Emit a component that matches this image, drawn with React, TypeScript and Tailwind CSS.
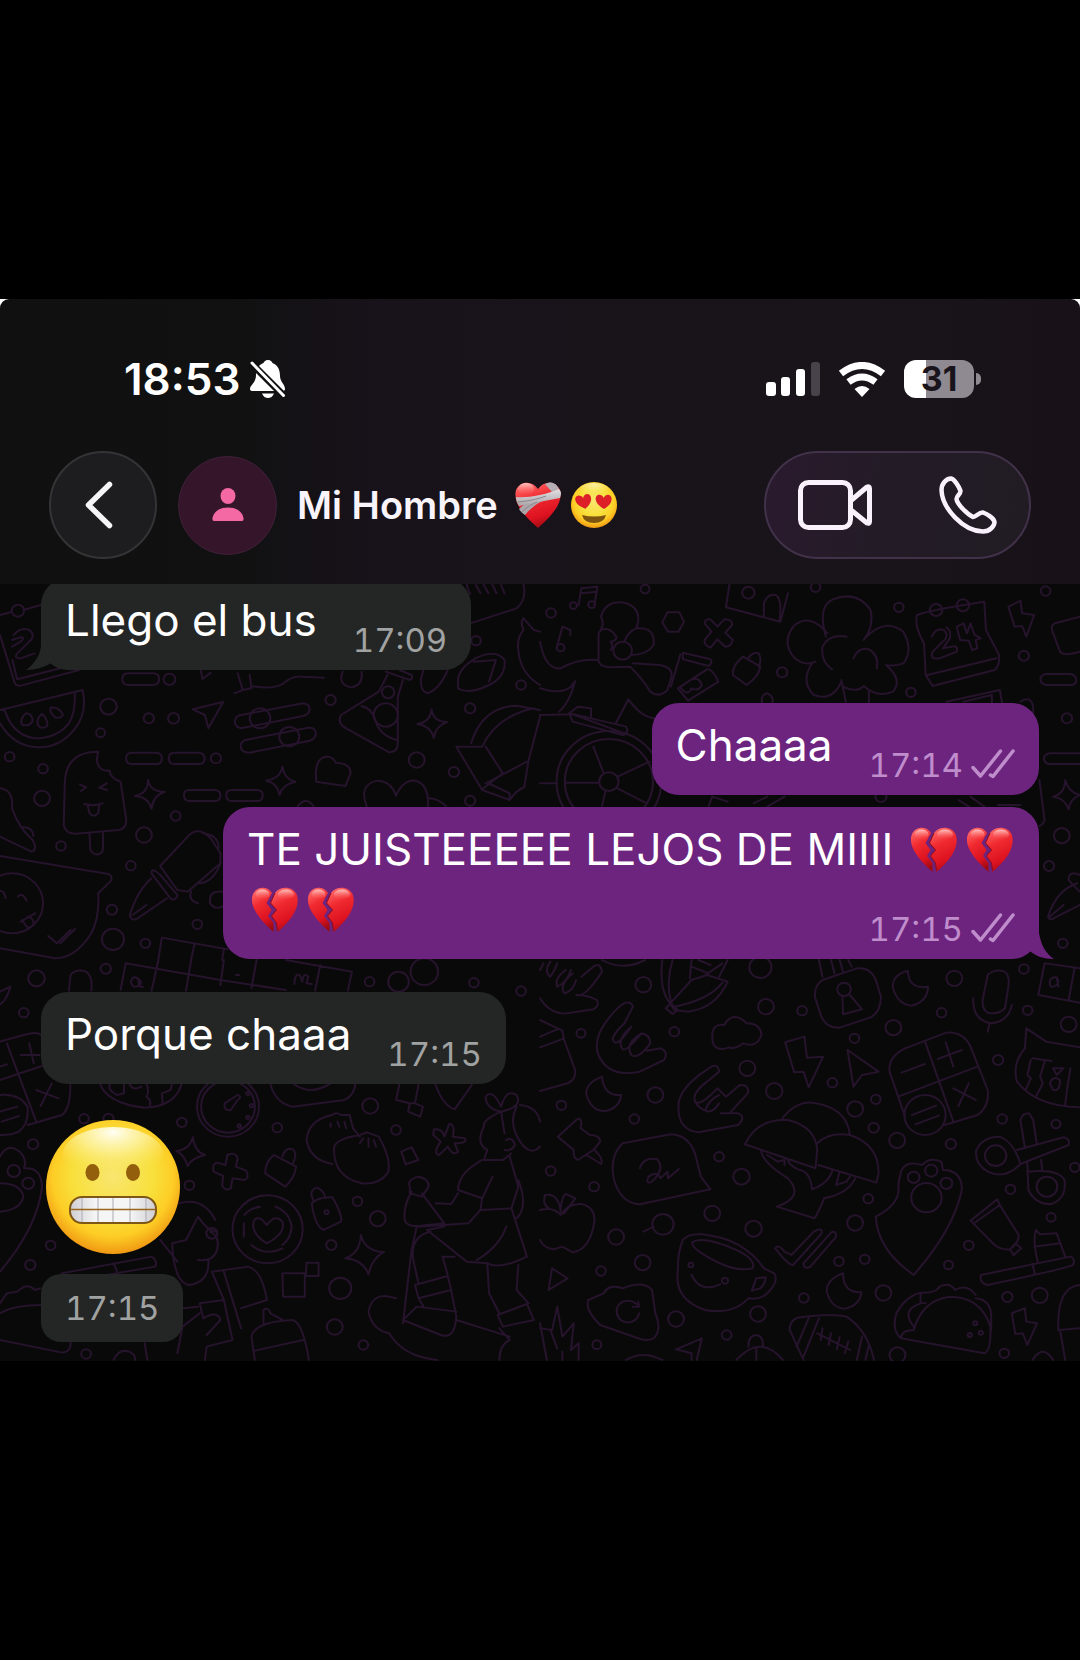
import type { ReactNode } from 'react';

type Dot = [number, number, number];

// Each quarter of the wallpaper is drawn on its own 1568-wide grid.
const topLeft = {
  lines: [
    'M0 105L30 97M68 90L118 75M0 165L40 300Q43 320 60 317L230 270M36 240L50 298L175 265M40 165Q60 140 85 150Q105 165 85 185L55 215Q35 235 60 235L100 220M35 200L60 185Q75 170 58 172L35 180',
    'M0 390L240 330Q255 400 215 450Q170 505 110 502Q40 500 0 430M12 386Q35 465 100 475Q165 475 200 430Q220 395 217 340M75 400Q55 420 65 435Q90 440 95 420Q92 400 75 400M122 402Q105 415 110 435Q120 450 137 438Q140 418 122 402M147 383Q143 400 162 413Q182 415 182 402Q170 380 147 383',
    'M372 280H443Q462 280 462 298Q462 315 443 315H372Q355 315 355 298Q355 280 372 280M383 518H455Q470 520 470 535Q470 552 455 552H383Q366 552 366 535Q366 518 383 518M506 518H578Q594 520 594 535Q594 552 578 552H506Q490 552 490 535Q490 518 506 518M550 630H625Q640 632 640 646Q640 663 625 663H550Q534 663 534 646Q534 630 550 630M673 630H748Q763 632 763 646Q763 663 748 663H673Q657 663 657 646Q657 630 673 630',
    'M560 388L648 366L605 445L595 405ZM583 270L588 297L612 278',
    'M695 406L880 370Q900 372 899 390Q895 405 880 408L700 445Q680 440 682 422Q684 410 695 406M713 480L895 443Q915 442 917 458Q918 475 900 482L725 518Q700 518 699 500Q698 485 713 480',
    'M1120 275L1190 300Q1200 295 1195 285L1160 270M1125 285L1100 335L990 405Q978 430 1005 445L1130 517Q1155 517 1155 490V350L1170 300M1050 378Q1080 385 1090 420Q1100 465 1152 480',
    'M1253 388Q1258 425 1298 426Q1265 437 1260 474Q1250 437 1212 432Q1250 425 1253 388M430 600Q435 635 478 636Q445 645 440 686Q430 650 392 648Q430 640 430 600M820 560Q825 598 858 606Q820 612 812 645Q805 608 773 602Q815 595 820 560',
    'M285 515Q190 515 188 610L185 735Q190 762 220 761L345 750Q370 745 366 715L350 605Q320 595 318 572Q285 575 281 540ZM260 760L262 808Q270 825 285 823Q300 820 299 800V757M232 613L250 622L235 633M310 610L288 623L311 630M245 672Q272 680 298 670M255 678L260 700Q270 715 285 700L288 675',
    'M945 530Q965 528 975 548Q1018 550 1018 580L1003 618L918 605L917 575Q920 535 945 530M1065 680Q1040 615 1095 602Q1135 602 1150 647Q1170 600 1205 602Q1245 610 1243 680M1245 655Q1270 655 1295 678M865 678Q888 648 910 678',
    'M1325 500L1400 500Q1440 410 1550 385M1325 500L1400 630L1480 660Q1500 630 1522 622L1535 540L1568 410M1368 490Q1400 380 1500 377L1568 390M1410 500L1460 580L1400 628M1410 610L1530 545M1422 612L1480 640V660',
    'M0 625Q40 630 35 685Q55 745 95 780Q110 810 92 815Q40 790 0 770M65 742Q95 740 97 768M0 828L315 882Q330 890 320 905L285 940Q290 1010 265 1060Q220 1135 160 1135L0 1105M0 932Q15 935 16 955M52 950Q65 935 77 962M60 1025L102 1000M65 1020Q80 1055 97 1035Q100 1015 80 1010M140 1068L165 1090L205 1050M175 1090L218 1047',
    'M465 858L545 770Q575 735 612 775L640 820V850L545 935L515 930ZM590 760Q635 765 635 805M440 880Q440 860 465 885L515 945Q510 965 495 955ZM440 895Q400 930 377 1005Q380 1025 400 1015L485 955M385 1005L425 975M555 935Q545 960 575 970M640 850Q620 905 580 910M645 935Q605 930 610 970Q625 990 645 980',
    'M470 1073L660 1108M470 1073L458 1150M565 1090L555 1140M650 1108L645 1140',
    'M1355 12Q1360 35 1365 42M1382 15L1395 40M1405 15L1418 40M1430 15L1442 40M1455 15L1465 40M1520 12Q1530 60 1500 85L1365 130M1520 115Q1510 125 1520 150Q1500 175 1505 210Q1510 280 1568 315M1520 115L1550 150L1568 155M1330 310Q1325 270 1380 235Q1440 205 1465 240Q1470 290 1420 315Q1360 345 1330 325ZM1375 245L1440 240L1420 305M1230 270Q1210 325 1240 340Q1275 330 1300 270',
    'M690 280L705 330L730 325L725 285M705 330L680 340M730 318Q790 330 820 312Q850 285 880 290L940 293M995 275Q980 315 1020 322Q1055 315 1050 275',
  ],
  dots: [
    [52, 92, 18], [492, 298, 17], [315, 380, 24], [292, 458, 13], [432, 415, 15], [504, 415, 16], [755, 415, 30], [840, 470, 29],
    [960, 360, 15], [1127, 337, 18], [1120, 405, 35], [1365, 385, 15], [1382, 182, 14], [1513, 315, 14], [28, 530, 14],
    [125, 566, 14], [122, 655, 23], [627, 535, 15], [510, 708, 14], [418, 765, 23], [177, 798, 14], [380, 857, 14], [1210, 540, 23],
    [1318, 576, 15], [1365, 662, 15], [325, 989, 15], [573, 1033, 14], [328, 1078, 32], [422, 1090, 14], [35, 970, 90],
  ] as Dot[],
};

const topRight = {
  lines: [
    'M112 75L120 25L167 20L158 75M120 40L165 35M48 205L65 140L88 150V165',
    'M0 185Q15 270 60 265Q110 235 170 240Q170 258 200 262L262 260Q300 300 320 335Q345 355 370 330M170 235V160Q190 135 177 110Q190 65 235 67Q290 75 285 125L280 145M177 150Q200 140 218 165Q230 180 205 185Q215 200 205 210M280 145Q335 140 330 195Q310 225 265 225M245 185Q255 155 280 145M270 250L345 255Q385 260 382 290L370 330M0 325Q60 345 90 320L102 303Q85 370 55 395M0 405L95 403L250 462M220 430L257 358Q300 420 345 415M85 400L250 440Q260 460 240 465L95 425Z',
    'M370 97H405L418 125L402 155H372L355 127ZM478 130Q480 115 495 118L515 140L535 118Q560 118 558 135L538 158L560 180Q555 200 538 200L515 178L495 203Q475 195 478 180L498 155Z',
    'M415 218L495 238Q502 250 490 258L415 238ZM408 222L380 320M400 325L485 268Q500 265 518 305L430 362ZM410 325Q430 350 440 325Q460 335 470 315Q460 290 445 298',
    'M590 230L640 260Q635 290 600 315L560 285Q558 255 590 230M605 235Q615 215 635 220Q645 240 635 260',
    'M550 12L540 82L698 125L720 40M650 112V70Q660 40 685 45Q705 60 695 125',
    'M830 170Q805 80 850 58Q920 30 960 90Q970 140 940 180M835 160Q780 95 735 140Q700 190 740 235Q770 260 800 245M890 170Q840 160 820 200Q815 245 848 268M940 178Q1000 110 1055 155Q1085 210 1055 250Q1025 260 1005 255M910 235Q925 200 955 208Q985 225 978 265M790 250Q755 305 795 345Q850 365 875 305M1005 255Q1055 300 1025 335Q980 355 940 318Q920 340 880 320M875 300L888 365M955 330V368',
    'M1095 105Q1130 90 1290 65L1295 150L1333 225Q1335 260 1320 270L1140 318L1120 285L1115 190Q1085 135 1095 105M1125 285L1325 235M1138 170Q1150 140 1175 152Q1190 170 1165 190L1140 215Q1130 240 1160 235L1210 215Q1215 195 1195 200L1170 205L1190 175Q1195 150 1180 142M1210 140L1220 180L1245 182L1255 210L1270 205L1265 180L1280 175L1262 165L1250 130L1240 160L1230 130Z',
    'M1360 80L1395 62L1400 100L1435 105L1412 170L1400 138L1378 140ZM1568 110L1495 130Q1480 135 1490 160L1510 215Q1520 230 1568 215M1470 282H1540Q1557 285 1557 300Q1557 315 1540 315H1470Q1453 312 1453 298Q1453 285 1470 282M1568 520H1480Q1462 525 1463 537Q1465 552 1480 552H1568',
    'M1525 600Q1535 638 1568 645Q1540 655 1535 688Q1525 655 1490 650Q1525 640 1525 600M1180 365L1335 330L1342 370M1230 365L1312 345V368M645 368Q640 345 660 340Q680 350 675 368M1395 365Q1425 345 1432 380V400M1450 600L1465 720Q1460 735 1450 738',
    'M1568 885Q1535 870 1535 900Q1560 930 1568 935M1560 910Q1500 930 1475 1010Q1480 1025 1500 1010L1568 975M1480 1010L1520 975',
    'M155 500L185 580M75 608H170M0 610H50M225 590L318 545M225 625L310 670M190 635L180 678',
    'M490 678L500 650L545 665M620 670L660 650M660 680L710 650M1215 660L1245 680M1250 650L1290 680M1330 675H1395M85 400L110 380L148 385V410',
  ],
  dots: [
    [32, 99, 14], [305, 27, 13], [97, 77, 10], [150, 74, 10], [60, 203, 11], [240, 212, 27], [605, 38, 18], [703, 277, 15],
    [800, 22, 14], [1042, 82, 14], [1150, 90, 18], [1228, 76, 18], [1468, 33, 14], [1405, 227, 15], [1077, 337, 14],
    [1530, 415, 15], [200, 605, 152], [200, 605, 128], [200, 605, 28], [1515, 767, 23], [1478, 858, 15], [1518, 1090, 14],
    [990, 650, 16],
  ] as Dot[],
};

const bottomLeft = {
  lines: [
    'M365 10L350 90M365 10L640 60L830 90M460 0L440 92M555 0L540 92M650 0L640 75M745 0L730 85M830 0L1022 35L1010 92M930 15L915 92M380 65Q385 45 400 55Q415 65 405 75Q385 90 380 65M400 55L405 80H415M855 72Q855 40 870 45L878 65Q880 35 895 50L890 70L905 72M685 45H695',
    'M200 92L205 45Q220 25 250 35Q270 50 265 92M0 95L30 80Q20 120 0 133M0 245L80 222Q110 215 120 225M0 360L130 315M20 250L105 485M80 495L180 465Q205 445 204 375M60 285H115M85 250L98 310M105 390L170 415M150 370L118 438M0 320L20 313M0 455L50 440M5 485L55 468M0 405Q55 400 80 440Q85 490 55 515Q30 527 0 525',
    'M290 370Q310 430 420 443Q510 440 528 370M320 370Q310 390 340 405L360 400V375M425 370Q435 395 425 410Q440 420 435 437M500 370L495 390L470 400L472 430M375 370Q385 395 410 380',
    'M652 430L690 405Q705 410 690 420L670 450Q650 455 652 430M785 372Q800 430 850 440L1000 420Q1030 405 1032 370M850 370Q900 410 960 370M1160 372L1150 420L1190 430L1185 455L1220 470L1228 440L1205 430L1215 375M1190 430H1205M1265 375Q1285 435 1320 448L1370 375',
    'M560 532Q565 575 595 585Q555 595 545 618Q535 585 512 573Q550 570 560 532M1048 825Q1060 875 1115 876Q1080 895 1070 943Q1055 900 1003 895Q1045 880 1048 825',
    'M660 585Q685 575 690 595L685 620L715 632Q725 655 710 660L675 655L670 685Q650 695 645 675L648 648L620 635Q615 610 630 608L655 615Z',
    'M795 585L860 620Q855 655 828 680L770 640Q770 605 795 585M820 590Q830 560 850 568Q865 580 850 612M905 730Q925 710 965 712Q995 765 990 785L940 810Q915 800 905 730M910 722Q895 690 920 683Q940 690 945 715',
    'M965 465Q895 480 890 540Q900 600 965 612M965 465Q975 455 990 465L1015 465L1025 505L1045 530M970 560Q980 535 1045 525L1065 517L1100 530Q1140 605 1125 640Q1100 675 1050 670Q965 650 970 560M960 490V500M980 485L985 500M1000 485L1005 505M1045 550L1055 535M1070 535V560M1085 540L1092 560',
    'M1260 508Q1285 505 1290 530L1305 492Q1322 492 1315 530L1350 535Q1358 550 1320 550L1330 575Q1315 590 1300 560L1275 585Q1255 580 1280 545L1258 525ZM1165 575L1195 562L1215 600L1178 613Z',
    'M1455 455Q1410 445 1410 410Q1430 385 1455 440Q1470 385 1500 405Q1520 440 1455 455M1455 455Q1400 480 1405 500Q1380 550 1415 570L1405 600H1460L1485 580M1455 455L1465 520M1500 440Q1475 490 1510 545Q1540 590 1568 560M1510 435Q1560 440 1568 485M1470 540Q1490 530 1495 555Q1485 575 1465 570M1400 600Q1330 640 1330 690L1400 715L1430 650M1480 590L1505 680L1485 745L1395 750M1485 745L1530 890Q1450 930 1415 910L1355 905L1240 810L1290 800M1395 750L1360 790L1215 800M1330 700L1310 732L1265 730M1400 715L1395 750M1505 660Q1535 740 1500 775M1470 800Q1450 860 1385 900',
    'M1190 680Q1180 660 1215 650Q1245 655 1245 680L1225 710L1190 700ZM1195 695Q1170 740 1175 780Q1180 800 1215 798L1290 790L1225 700M1210 800L1195 870L1170 1090M1250 815Q1190 830 1200 900L1215 970M1300 945L1285 890H1320M1205 975L1300 948L1310 990L1215 1015ZM1215 1015L1230 1040M1310 990L1325 1070Q1320 1140 1280 1125L1170 1080M1170 1080L1210 1040L1325 1055M1070 1055Q1080 1000 1130 1010L1150 1015M1070 1055Q1080 1110 1130 1120Q1170 1190 1270 1200M1415 910L1420 1000L1450 1060M1505 915L1500 990L1535 1030M1445 1065L1530 1032L1550 1080L1460 1100ZM1450 1105L1480 1140Q1450 1155 1450 1200M1325 1080L1480 1130',
    'M735 800Q735 765 760 778L775 795Q800 760 820 785Q830 820 775 850Q740 830 735 800M820 940H885V1010H822ZM890 908H925V948H888ZM710 765Q725 745 755 740M800 740Q840 755 847 800Q845 835 820 855M730 855Q770 890 820 865M708 790V830',
    'M0 590Q20 550 50 570Q80 590 70 625Q120 620 122 680Q110 800 0 935M0 670Q60 670 68 710Q60 750 0 755M520 730Q590 710 625 780M500 850L540 840L575 770Q600 810 625 815M500 850Q505 970 550 975Q610 965 605 900M610 815Q640 830 630 870Q620 905 575 900M465 840L515 905M180 940L440 890Q460 905 450 920L280 950M330 910L340 935M615 935L720 920Q760 930 775 1020M650 935L700 1105M615 935L650 1020M650 1020L580 1030L590 1075Q630 1050 640 1080L600 1125M650 1020L675 1140L600 1160L595 1200M700 1045L775 1020M530 1045L575 1040M515 1180L530 1100L580 1060M765 1090L765 1050Q780 1040 785 1060L820 1080M730 1130Q740 1085 850 1080Q880 1090 897 1200M730 1130L740 1200M740 1172L880 1140M420 1150L428 1200',
    'M0 1030L20 1000L50 995Q80 965 100 990L118 985M0 1060Q40 1035 120 1035M0 1140L180 1178Q210 1175 204 1140M330 1200Q345 1165 375 1175Q395 1185 392 1200',
  ],
  dots: [
    [106, 55, 24], [307, 26, 15], [69, 158, 14], [1232, 35, 40], [1157, 65, 30], [1073, 65, 14], [1376, 68, 14], [1513, 93, 14],
    [662, 440, 90], [662, 440, 78], [528, 487, 14], [805, 503, 14], [1075, 438, 23], [1150, 510, 14], [244, 476, 14], [315, 476, 15],
    [96, 553, 15], [550, 676, 14], [777, 808, 102], [1038, 724, 14], [1097, 776, 23], [962, 855, 15], [948, 757, 6],
    [147, 856, 14], [88, 915, 15], [988, 985, 32], [972, 1101, 23], [1055, 1155, 14], [250, 1182, 14], [82, 670, 17], [40, 633, 18],
    [615, 820, 16], [720, 400, 5], [730, 437, 5], [720, 472, 5], [695, 498, 5],
  ] as Dot[],
};

const bottomRight = {
  lines: [
    'M10 10L0 30M30 5Q10 35 30 50Q45 30 50 10M75 30Q40 55 50 80Q75 70 90 30M95 40Q55 75 70 100Q95 95 105 60M0 115Q30 165 80 160L155 148Q175 135 165 120Q140 105 105 105Q130 115 180 35Q175 5 155 20L120 50',
    'M230 140Q260 115 270 140L245 190M230 140Q150 220 168 280Q195 355 290 335L360 300Q375 275 350 265L310 272M245 190Q200 235 215 245Q225 260 265 200M265 200Q220 240 240 268Q250 275 295 220M295 220Q245 250 265 285Q285 300 320 250Q320 225 295 220',
    'M490 325Q515 305 520 335L485 365M490 325Q400 385 402 440Q400 510 460 517L575 495Q600 470 575 460H525M485 365Q440 400 450 425Q465 440 515 385M515 385L540 410L580 375Q610 375 603 400L550 460M480 450Q490 420 520 405M450 425Q465 450 490 455Q510 450 520 430',
    'M355 0Q345 90 378 130L390 150L430 155Q510 145 545 65L485 45L440 60L378 130M385 0Q365 70 380 125M440 0L435 55M440 20L490 40M530 10L480 45M545 0L520 50M495 15L460 0M390 140Q490 120 530 68M365 145L380 130L400 150L385 162Z',
    'M500 230Q500 190 535 195Q560 150 600 190Q640 190 643 225Q630 265 590 250Q565 270 550 262Q500 280 500 230M180 350Q130 370 135 405Q150 455 190 453Q230 445 236 405Q185 410 180 350M1068 32Q1020 45 1025 85Q1040 135 1080 137Q1125 125 1127 80Q1070 90 1068 32M880 940Q830 960 833 995Q845 1045 885 1046Q930 1035 933 997Q880 1000 880 940',
    'M712 247L768 230L775 293L822 290L780 382L765 335L738 337ZM893 270L983 335L935 345L910 380ZM1370 1060L1408 1045L1412 1085L1443 1090L1415 1155L1402 1120L1380 1122ZM35 925L80 955L25 990ZM395 1168L470 1135L455 1200M395 1168L440 1180L440 1200',
    'M820 60L920 25Q960 20 975 60L990 110Q990 155 960 172L870 203Q830 205 815 165L798 110Q797 75 820 60M820 50L810 0M905 20L895 0M845 0L855 40M870 0L880 35M878 108L880 163L935 148L900 105',
    'M1300 45Q1320 25 1350 35Q1365 50 1360 80L1350 145Q1330 165 1300 158Q1280 145 1287 110ZM1258 115Q1255 180 1310 190Q1360 185 1370 135M1305 190L1300 215M1568 25L1465 10L1447 105L1568 128M1552 25L1535 120M1480 65Q1485 50 1500 52Q1510 65 1500 75Q1480 90 1480 65M1500 52L1505 80',
    'M1060 265L1180 218Q1230 215 1250 260L1300 390Q1305 440 1270 465L1175 495M1060 265Q1010 290 1015 335L1060 470M1040 410L1270 320M1118 245L1200 485M1050 338L1118 312M1155 297L1225 270M1178 247L1200 320M1200 385L1265 420M1245 370L1215 438M1080 465L1150 437M1090 493L1158 467',
    'M1412 205L1470 245L1568 262M1412 205L1408 265Q1370 310 1385 365Q1440 440 1568 442M1430 295L1485 303M1425 300L1415 345L1425 355L1410 390M1465 305L1452 350L1460 370L1440 410M1540 325L1530 390L1525 435M1490 325L1520 325L1500 345ZM1480 370Q1490 345 1510 360Q1510 395 1490 390Z',
    'M52 530L105 480Q120 470 120 490L118 505L145 525Q175 525 175 545L155 570L110 600Q95 595 98 570ZM135 585L178 612Q185 595 158 570M0 180L65 212L70 240L102 330Q105 360 80 370L0 393M0 230L50 208M0 262L70 235',
    'M240 550L380 523Q430 525 450 580L467 650L495 688L290 733Q235 730 215 660Q200 590 240 550M290 625Q300 590 340 598Q365 625 325 665Q305 675 315 650Q340 630 350 655L370 635L372 655L403 627',
    'M702 478Q740 425 790 428Q890 440 900 525M595 553Q630 475 720 480Q800 500 805 570L800 625ZM805 550Q840 515 900 525Q985 555 983 640L977 668L808 615M642 575Q650 610 720 655Q770 710 688 740L797 775Q805 765 825 715Q895 700 915 655M660 585L690 605L710 600V615M720 600Q725 620 760 632Q785 640 790 688Q840 670 850 628M870 635L860 675L890 665L900 650',
    'M0 750Q40 740 60 765Q80 730 120 732Q160 740 158 785Q145 870 95 877L65 860L40 868Q10 865 0 840M15 705Q55 700 60 755M15 705Q5 735 30 748M60 745Q65 705 75 702L103 715L70 760M300 815L330 800',
    'M415 840Q430 820 470 823Q590 835 650 925L680 940Q695 965 660 1000Q640 1020 605 1015Q560 1065 480 1050Q390 1020 400 935Q400 870 415 840M442 848Q470 825 570 870Q630 900 617 925Q560 940 470 880Q440 860 442 848M440 945Q465 1000 523 973M628 955L655 952Q655 970 640 985L615 992Z',
    'M683 865Q690 850 710 875L730 885L795 815Q820 800 818 820L735 915Q720 915 683 865M765 910L845 818Q860 810 860 830L785 920Q765 930 765 910',
    'M1048 635Q1060 600 1110 615Q1130 590 1165 605L1170 630Q1225 630 1225 690Q1200 810 1085 945Q980 870 975 770Q1050 730 1040 675Z',
    'M1395 480Q1400 460 1420 460L1432 480L1442 550M1395 480L1408 565M1385 570L1520 532Q1540 535 1535 555L1395 612M1395 612Q1350 660 1300 635Q1260 610 1267 570Q1285 530 1335 530Q1375 545 1395 612M1415 610L1418 690Q1440 735 1485 732Q1530 715 1523 660Q1505 625 1415 635M1455 600L1458 628',
    'M1250 782L1328 718L1335 735L1390 825Q1390 850 1365 868Q1340 870 1320 855ZM1260 790L1335 735M1365 868L1380 850L1397 865L1375 885ZM1440 810Q1430 840 1445 905M1440 810L1452 823L1500 820L1525 890M1435 860L1510 850M1280 945L1540 890Q1555 895 1548 915Q1530 925 1300 975Q1275 970 1280 945M1430 912L1437 942',
    'M140 1020L185 1000Q200 970 240 985Q300 960 325 990L335 1060Q355 1110 330 1135Q310 1145 285 1135L175 1095Q130 1050 140 1020M288 1060Q280 1090 250 1087Q220 1080 223 1045Q235 1015 270 1025L285 1035M285 1025L288 1040L270 1040',
    'M1048 1135L1290 1180Q1310 1175 1308 1100Q1280 1010 1190 1010Q1110 1020 1085 1110Q1050 1110 1048 1135M1048 1135Q1020 1110 1035 1060Q1060 1010 1105 998Q1150 1000 1160 980Q1190 965 1205 990Q1240 970 1265 1005M1085 1100Q1055 1060 1085 1040Q1110 1025 1120 1030M1105 998V1025M1265 1015Q1310 1020 1310 1070V1110',
    'M765 1200L725 1110Q725 1070 770 1070Q850 1060 890 1070Q950 1110 970 1200M745 1160L780 1075M765 1190L810 1075M920 1200L935 1130M945 1200L955 1155M805 1120L900 1170M820 1105L815 1140M845 1120L838 1155M870 1132L862 1168M895 1145L885 1180',
    'M0 1090L20 1200M0 1105L35 1110L50 1040L65 1130L98 1090L90 1170L112 1150V1200M50 1165L30 1110M65 1175V1200M250 1200Q300 1170 355 1200M570 1200Q640 1120 705 1200M605 1160Q605 1125 630 1125Q650 1130 647 1160M628 1165V1200M1568 975Q1500 980 1505 1110L1568 1105M1510 1110L1525 1200M1430 1200Q1460 1150 1490 1200M180 0Q240 35 305 0',
  ],
  dots: [
    [300, 74, 23], [640, 22, 32], [656, 140, 23], [761, 152, 14], [883, 88, 20], [1203, 55, 23], [1405, 27, 14], [1416, 151, 14],
    [1535, 193, 23], [119, 220, 13], [390, 215, 14], [602, 325, 23], [680, 393, 24], [849, 368, 14], [913, 235, 14], [1026, 203, 23],
    [1166, 158, 14], [1330, 300, 15], [335, 405, 23], [62, 436, 14], [274, 477, 14], [915, 447, 23], [975, 418, 14], [969, 503, 15],
    [1037, 541, 23], [1193, 552, 15], [1342, 477, 14], [1498, 492, 13], [1118, 465, 60], [31, 633, 14], [157, 680, 14], [520, 590, 14],
    [585, 650, 24], [953, 716, 14], [1085, 652, 17], [1136, 632, 18], [1180, 670, 17], [1122, 713, 44], [1323, 587, 31], [1472, 680, 30],
    [1366, 688, 14], [1553, 622, 14], [357, 793, 31], [221, 831, 23], [500, 760, 23], [620, 806, 24], [915, 789, 23], [1484, 772, 13],
    [298, 908, 23], [177, 933, 14], [868, 904, 14], [943, 898, 14], [1186, 915, 13], [1245, 856, 14], [438, 915, 7], [537, 962, 9],
    [766, 1014, 14], [997, 999, 23], [1357, 1011, 15], [1451, 1006, 23], [633, 1062, 23], [395, 1077, 23], [165, 1154, 13],
    [542, 1125, 14], [1348, 1180, 14], [1038, 1185, 23], [1264, 1090, 6], [1248, 1125, 6], [1280, 1118, 6],
  ] as Dot[],
};

const quarters = [
  { ...topLeft, place: 'translate(0 -4) scale(.3444 .3333)' },
  { ...topRight, place: 'translate(540 -4) scale(.3444 .3333)' },
  { ...bottomLeft, place: 'translate(0 376) scale(.3444 .3333)' },
  { ...bottomRight, place: 'translate(540 376) scale(.3444 .3333)' },
];

function Wallpaper() {
  return (
    <svg
      aria-hidden="true"
      viewBox="0 0 1080 777"
      preserveAspectRatio="xMidYMin slice"
      className="absolute inset-0 h-full w-full fill-none stroke-[#26132c]"
    >
      {quarters.map(q => (
        <g key={q.place} transform={q.place} strokeWidth="6" strokeLinejoin="round" strokeLinecap="round">
          {q.lines.map(d => (
            <path key={d} d={d} />
          ))}
          {q.dots.map(([x, y, r]) => (
            <circle key={`${x}-${y}-${r}`} cx={x} cy={y} r={r} />
          ))}
        </g>
      ))}
    </svg>
  );
}

function EmojiPaints() {
  return (
    <svg aria-hidden="true" className="absolute h-0 w-0">
      <defs>
        <radialGradient id="face" cx=".5" cy=".42" r=".6">
          <stop offset="0" stopColor="#f8e670" />
          <stop offset=".5" stopColor="#f8e03c" />
          <stop offset=".75" stopColor="#fdcd25" />
          <stop offset="1" stopColor="#ee9010" />
        </radialGradient>
        <radialGradient id="shine" cx=".5" cy=".1" r=".75">
          <stop offset="0" stopColor="#fffef4" />
          <stop offset=".45" stopColor="#fdf3a6" stopOpacity=".75" />
          <stop offset="1" stopColor="#fbe75c" stopOpacity="0" />
        </radialGradient>
        <linearGradient id="teeth" x1="0" y1="0" x2="1" y2="0">
          <stop offset="0" stopColor="#cfcfd3" />
          <stop offset=".3" stopColor="#f5f5f6" />
          <stop offset=".7" stopColor="#f5f5f6" />
          <stop offset="1" stopColor="#cfcfd3" />
        </linearGradient>
        <linearGradient id="heart" x1=".3" y1="0" x2=".6" y2="1">
          <stop offset="0" stopColor="#ff6a6a" />
          <stop offset=".35" stopColor="#f02a30" />
          <stop offset=".75" stopColor="#dc1220" />
          <stop offset="1" stopColor="#9d0a12" />
        </linearGradient>
        <linearGradient id="gloss" x1="0" y1="0" x2="0" y2="1">
          <stop offset="0" stopColor="#ffd0cc" stopOpacity=".9" />
          <stop offset="1" stopColor="#ff5a5a" stopOpacity="0" />
        </linearGradient>
        <linearGradient id="bandage" x1="0" y1="0" x2="0" y2="1">
          <stop offset="0" stopColor="#e3e1e4" />
          <stop offset="1" stopColor="#aaa4a9" />
        </linearGradient>
      </defs>
    </svg>
  );
}

function BrokenHeart() {
  return (
    <svg role="img" aria-label="💔" viewBox="0 0 48 48" className="mx-1 inline-block h-12 w-12 align-[-9px]">
      <path
        d="M21 7C17 0 6 0 2 8C-2 18 5 30 22.500 46L22.500 37L17 30L20.500 24L15.500 17Z"
        fill="url(#heart)"
      />
      <path
        d="M24 7C29 0 41 0 45.500 8C50 19 42 33 26.500 46L25.500 37L20.500 30L25.500 24L19.500 17Z"
        fill="url(#heart)"
      />
      <path d="M24 7L19.500 17L25.500 24L20.500 30L25.500 37L26.500 45" fill="none" stroke="#8d0a1c" strokeWidth="1" />
      <ellipse cx="11.500" cy="8.500" rx="7" ry="5" fill="url(#gloss)" />
      <ellipse cx="35" cy="8.500" rx="8" ry="5" fill="url(#gloss)" />
    </svg>
  );
}

function MendingHeart() {
  return (
    <svg role="img" aria-label="❤️‍🩹" viewBox="0 0 48 48" className="h-12 w-12">
      <path d="M24 8C18-1 6 0 2 9C-1 21 8 33 24 47C40 33 49 21 46 9C42 0 30-1 24 8Z" fill="url(#heart)" />
      <ellipse cx="12" cy="8" rx="8" ry="6" fill="url(#gloss)" />
      <path d="M5 28C10 23 16 19 23 16L30 19C22 23 16 28 11 34C8 32 6 30 5 28Z" fill="#aca6ab" />
      <path d="M31 3C36 0 42 1 45 8L38 11Z" fill="#b5afb5" />
      <path d="M2 16C14 17 31 14 45 8C48 11 47 14 46 17C32 20 18 22 5 25C3 22 2 19 2 16Z" fill="url(#bandage)" />
      <path d="M4 21C15 20 24 18 32 15M8 31C13 26 18 23 23 21" fill="none" stroke="#8d868c" strokeWidth="1" />
    </svg>
  );
}

function HeartEyes() {
  const eye = 'M0 2C-3-3-9-1-8 4C-7 9-2 11 1 13C5 10 9 6 7.500 1C6-3 1-2 0 2Z';
  return (
    <svg role="img" aria-label="😍" viewBox="0 0 48 48" className="h-12 w-12">
      <circle cx="24" cy="24" r="23" fill="url(#face)" />
      <ellipse cx="24" cy="9" rx="15" ry="7" fill="url(#shine)" opacity=".6" />
      <path d={eye} transform="translate(13 15) rotate(-6)" fill="#dd2027" />
      <path d={eye} transform="translate(34 15) rotate(4)" fill="#dd2027" />
      <path d="M12 34Q24 37 36 34Q34 42 24 42Q14 42 12 34Z" fill="#7d5410" />
    </svg>
  );
}

function Grimace() {
  return (
    <svg role="img" aria-label="😬" viewBox="0 0 134 134" className="block h-[134px] w-[134px]">
      <circle cx="67" cy="67" r="67" fill="url(#face)" />
      <ellipse cx="67" cy="34" rx="50" ry="27" fill="url(#shine)" />
      <ellipse cx="46.500" cy="52.500" rx="7" ry="8.500" fill="#935f0c" />
      <ellipse cx="87" cy="52.500" rx="7" ry="8.500" fill="#935f0c" />
      <rect x="24" y="77" width="86" height="26" rx="12" fill="url(#teeth)" stroke="#7e5615" strokeWidth="2" />
      <path d="M36 78V102M52 78V102M67 78V102M84 78V102M100 78V102" stroke="#aaaab2" strokeWidth="1" />
      <path d="M24 89.500H110" stroke="#98651a" strokeWidth="1.500" />
    </svg>
  );
}

function Checks() {
  return (
    <svg
      role="img"
      aria-label="Leído"
      viewBox="0 0 44 30"
      className="mb-[6px] h-[30px] w-[44px] fill-none stroke-current stroke-[3.5]"
      strokeLinecap="round"
      strokeLinejoin="round"
    >
      <path d="M2 18.500L9.500 27L29.500 2M19.500 26L22 27.500L42 2" />
    </svg>
  );
}

function Time({ value, read }: { value: string; read?: boolean }) {
  return (
    <span
      className={`flex items-end gap-2 self-end text-[33px] leading-10 tabular-nums ${
        read ? 'text-[#c08dcc]' : 'text-[#a1a3a2]'
      }`}
    >
      <time>{value}</time>
      {read && <Checks />}
    </span>
  );
}

function Bubble({ children, time, mine, tail }: { children: ReactNode; time: string; mine?: boolean; tail?: boolean }) {
  return (
    <div
      className={`relative flex w-fit justify-between gap-9 rounded-[27px] px-6 pt-3 pb-2.5 ${
        mine ? 'bg-[#6c247f]' : 'bg-[#242625]'
      }`}
    >
      <p className="pb-2.5 text-[44px] leading-[60px] text-white">{children}</p>
      <Time value={time} read={mine} />
      {tail && (
        <svg aria-hidden="true" viewBox="0 0 40 34" className="absolute bottom-0 -left-[15px] h-[34px] w-10 fill-[#242625]">
          <path d="M15 0V10C14 20 8 28 0 34C10 34 19 31 25 27L40 20V0Z" />
        </svg>
      )}
    </div>
  );
}

function BellOff() {
  return (
    <svg role="img" aria-label="Silencio" viewBox="0 0 36 38" className="h-[38px] w-9">
      <path
        d="M18 0C21 0 22 2 22.500 3C28 5 30 10 30 16C30 22 35 24 35 29Q35 31 32 31H3Q0 31 0 29C0 25 6 23 6 15C6 8 9 5 13.500 3C14 2 15 0 18 0ZM12 33.500H24Q22 38 18 38Q14 38 12 33.500Z"
        className="fill-white"
      />
      <path d="M0 2L34 36" className="stroke-[#111111] stroke-[7]" />
      <path d="M2 3L33.500 35.500" className="stroke-white stroke-[3]" strokeLinecap="round" />
    </svg>
  );
}

function StatusIcons() {
  return (
    <div className="flex items-center">
      <svg role="img" aria-label="Señal" viewBox="0 0 54 34" className="h-[34px] w-[54px] fill-white">
        <rect y="20" width="10" height="14" rx="3" />
        <rect x="15" y="15" width="9" height="19" rx="3" />
        <rect x="30" y="7" width="9" height="27" rx="3" />
        <rect x="45" width="9" height="34" rx="3" className="fill-[#48434a]" />
      </svg>
      <svg role="img" aria-label="Wi-Fi" viewBox="0 0 48 35" className="ml-[18px] h-[35px] w-12">
        <path d="M3 11.500Q24-4.500 45 11.500M10.500 20Q24 10 37.500 20" className="fill-none stroke-white stroke-[7]" />
        <path d="M16.500 27Q24 21 31.500 27L24 35Z" className="fill-white" />
      </svg>
      <div className="ml-[18px] flex h-[38px] w-[70px] items-center justify-center rounded-[12px] bg-[linear-gradient(90deg,#ffffff_31%,#8f8a91_31%)] text-[34px] leading-none font-bold text-[#19141b]">
        31
      </div>
      <div className="ml-0.5 h-3 w-[5px] rounded-r-full bg-[#8f8a91]" />
    </div>
  );
}

export default function App() {
  return (
    <div className="min-h-screen bg-black pt-[299px] pb-[299px] font-['Inter','Liberation_Sans',sans-serif]">
      <EmojiPaints />
      <div className="bg-white">
        <header className="h-[285px] rounded-t-[9px] bg-[linear-gradient(90deg,#101010_0%,#111112_23%,#18121a_35%,#19131a_80%,#181118_100%)] pt-[58px]">
          <div className="flex h-11 items-center justify-between pr-[99px] pl-[124px]">
            <div className="flex items-center gap-2.5">
              <time className="text-[44px] leading-none font-semibold text-white">18:53</time>
              <BellOff />
            </div>
            <StatusIcons />
          </div>

          <div className="mt-[50px] flex items-center px-[49px]">
            <button
              aria-label="Atrás"
              className="flex h-[108px] w-[108px] items-center justify-center rounded-full border-2 border-[#343436] bg-[#1d1d1f]"
            >
              <svg viewBox="0 0 28 48" className="-ml-2 h-12 w-7 fill-none stroke-[#f5f4f6] stroke-[5.500]" strokeLinecap="round" strokeLinejoin="round">
                <path d="M24.500 3.500L3.500 24L24.500 44.500" />
              </svg>
            </button>
            <div className="ml-[21px] flex h-[99px] w-[99px] items-center justify-center rounded-full border border-[#3f2038] bg-[#34152a]">
              <svg aria-hidden="true" viewBox="0 0 32 34" className="h-[34px] w-8 fill-[#f468a4]">
                <ellipse cx="16" cy="8" rx="7.500" ry="8" />
                <path d="M2 33Q0 33 0.500 30C2 23 8 19.500 16 19.500S30 23 31.500 30Q32 33 30 33Z" />
              </svg>
            </div>
            <h1 className="ml-5 text-[38px] leading-[48px] font-semibold text-[#f8f4fa]">Mi Hombre</h1>
            <div className="ml-4 flex gap-2">
              <MendingHeart />
              <HeartEyes />
            </div>
            <div className="ml-auto flex h-[108px] w-[267px] items-center justify-between rounded-full border-2 border-[#41324a] bg-[linear-gradient(100deg,#2a1a2e_0%,#231c26_45%,#211b24_100%)] px-8">
              <button aria-label="Videollamada">
                <svg viewBox="0 0 74 50" className="block h-[50px] w-[74px] fill-none stroke-[#f9f1fb] stroke-[5]" strokeLinejoin="round">
                  <rect x="2.500" y="2.500" width="50" height="45" rx="8" />
                  <path d="M53 20.500L69 7Q71.500 6 71.500 8.500V41.500Q71.500 44 69 43L53 30" />
                </svg>
              </button>
              <button aria-label="Llamar">
                <svg viewBox="0 0 58 58" className="block h-[58px] w-[58px] fill-none stroke-[#f9f1fb] stroke-[4.500]" strokeLinejoin="round">
                  <path d="M12 2.500C7 2.500 2.500 8 2.500 14C3 32 24 55 44 55.500C51 55.500 55.500 50 55.500 46C55 42 48 38 44 36.500C40 36 37 41 34 41C28 38 18 28 17.500 23C17.500 20 21.500 18.500 21.500 15C20 10 15 3 12 2.500Z" />
                </svg>
              </button>
            </div>
          </div>
        </header>
      </div>

      <main className="relative overflow-hidden bg-[#090909] px-[41px] pb-[19px]">
        <Wallpaper />
        <div className="relative -mt-1.5 flex flex-col items-start">
          <Bubble time="17:09" tail>
            Llego el bus
          </Bubble>

          <div className="mt-[33px] self-end">
            <Bubble time="17:14" mine>
              Chaaaa
            </Bubble>
          </div>

          <div className="relative mt-3 grid w-[816px] max-w-full self-end rounded-[27px] bg-[#6c247f] px-6 pt-3 pb-2.5">
            <p className="col-start-1 row-start-1 -mr-3 pb-2.5 text-[44px] leading-[60px] text-white">
              TE JUISTEEEEE LEJOS DE MIIII <BrokenHeart />
              <BrokenHeart />
              <BrokenHeart />
              <BrokenHeart />
            </p>
            <div className="col-start-1 row-start-1 flex justify-end">
              <Time value="17:15" read />
            </div>
            <svg aria-hidden="true" viewBox="0 0 40 34" className="absolute -right-[15px] bottom-0 h-[34px] w-10 fill-[#6c247f]">
              <path d="M25 0V8C27 20 32 29 40 34C30 34 21 31 16 26L0 18V0Z" />
            </svg>
          </div>

          <div className="mt-[33px]">
            <Bubble time="17:15">Porque chaaa</Bubble>
          </div>

          <div className="mt-9 ml-[5px]">
            <Grimace />
          </div>
          <div className="mt-5 flex h-[68px] items-center rounded-[20px] bg-[#242625] px-6">
            <time className="text-[33px] leading-10 text-[#a1a3a2] tabular-nums">17:15</time>
          </div>
        </div>
      </main>
    </div>
  );
}
